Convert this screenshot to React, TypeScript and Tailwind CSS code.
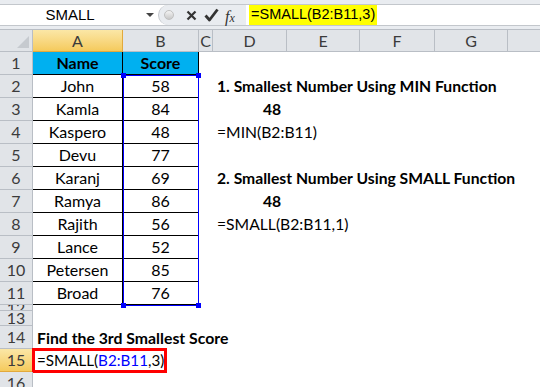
const FONT = "font-['Lato','Open_Sans',sans-serif]"

const cols = [90, 76, 14, 74, 73, 75, 73, 40]
const letters = ['A', 'B', 'C', 'D', 'E', 'F', 'G', '']

const data = [
  ['John', '58'],
  ['Kamla', '84'],
  ['Kaspero', '48'],
  ['Devu', '77'],
  ['Karanj', '69'],
  ['Ramya', '86'],
  ['Rajith', '56'],
  ['Lance', '52'],
  ['Petersen', '85'],
  ['Broad', '76'],
]

const side: Record<number, { text: string; bold?: boolean; indent?: boolean }> = {
  2: { text: '1. Smallest Number Using MIN Function', bold: true },
  3: { text: '48', bold: true, indent: true },
  4: { text: '=MIN(B2:B11)' },
  6: { text: '2. Smallest Number Using SMALL Function', bold: true },
  7: { text: '48', bold: true, indent: true },
  8: { text: '=SMALL(B2:B11,1)' },
}

function RowHead({ n, h, active }: { n: number; h: number; active?: boolean }) {
  return (
    <div
      style={{ height: h }}
      className={`w-[33px] shrink-0 flex items-center justify-center overflow-hidden border-r border-b text-[16px] text-[#3b3b3b] ${
        active
          ? 'bg-gradient-to-b from-[#fbe7a6] to-[#f5ca5b] border-[#e2a93c]'
          : 'bg-[#e1e4e8] border-[#b9bec5]'
      }`}
    >
      {n}
    </div>
  )
}

export default function App() {
  return (
    <div className={`w-[540px] h-[387px] overflow-hidden bg-white relative ${FONT}`}>
      {/* formula bar */}
      <div className="h-[30px] bg-[#e9ecf0] border-b border-[#b9bec5] pt-[4px]">
        <div className="h-[22px] flex bg-white border-y border-[#c3c7cc]">
          <div className="w-[158px] flex items-center relative">
            <span className="w-full text-center text-[15px] text-black font-['Liberation_Sans',sans-serif] pr-[18px]">SMALL</span>
            <span className="absolute right-[4px] top-[8px] w-0 h-0 border-x-[4px] border-x-transparent border-t-[4px] border-t-[#444]" />
          </div>
          <div className="w-[88px] flex items-center bg-[#e9ecf0] rounded-l-full border-l border-[#c3c7cc] relative">
            <span className="absolute left-[5px] top-[5px] w-[10px] h-[10px] rounded-full bg-gradient-to-b from-[#f4f4f4] to-[#c8c8c8] border border-[#c0c0c0]" />
            <svg className="absolute left-[27px] top-[5px]" width="11" height="11" viewBox="0 0 11 11">
              <path d="M1.5 1.5 L9.5 9.5 M9.5 1.5 L1.5 9.5" stroke="#333" strokeWidth="2.2" fill="none" />
            </svg>
            <svg className="absolute left-[45px] top-[3px]" width="15" height="14" viewBox="0 0 15 14">
              <path d="M1.5 7.5 L5.5 12 L13.5 1.5" stroke="#333" strokeWidth="2.8" fill="none" strokeLinejoin="round" />
            </svg>
            <span className="absolute left-[66px] top-[0px] text-[16px] italic text-[#333] font-['Liberation_Serif',serif]">
              f<span className="text-[12px]">x</span>
            </span>
          </div>
          <div className="flex-1 flex items-center pl-[3px]">
            <span className="bg-[#ffff00] h-full flex items-center px-[2px] text-[14.5px] text-black font-['Liberation_Sans',sans-serif]">
              =SMALL(B2:B11,3)
            </span>
          </div>
        </div>
      </div>

      {/* column headers */}
      <div className="flex h-[22px]">
        <div className="w-[33px] shrink-0 bg-[#e1e4e8] border-r border-b border-[#b9bec5] relative overflow-hidden">
          <span className="absolute right-[3px] bottom-[3px] w-0 h-0 border-l-[12px] border-l-transparent border-b-[12px] border-b-[#c6cacf]" />
        </div>
        {cols.map((w, i) => (
          <div
            key={i}
            style={{ width: w }}
            className={`shrink-0 flex items-center justify-center text-[16px] text-[#3b3b3b] border-r border-b ${
              i === 0
                ? 'bg-gradient-to-b from-[#fbe7a6] to-[#f5ca5b] border-[#e2a93c]'
                : 'bg-[#e1e4e8] border-[#b9bec5]'
            }`}
          >
            {letters[i]}
          </div>
        ))}
      </div>

      {/* row 1 */}
      <div className="flex h-[23px]">
        <RowHead n={1} h={23} />
        <div className="w-[90px] bg-[#00b0f0] border-r border-b border-black flex items-center justify-center text-[16px] font-bold text-black">
          Name
        </div>
        <div className="w-[76px] bg-[#00b0f0] border-r border-b border-black flex items-center justify-center text-[16px] font-bold text-black">
          Score
        </div>
      </div>

      {data.map(([name, score], i) => {
        const n = i + 2
        const s = side[n]
        return (
          <div key={n} className="flex h-[23px]">
            <RowHead n={n} h={23} />
            <div className="w-[90px] border-r border-b border-black flex items-center justify-center text-[16px] text-black">
              {name}
            </div>
            <div className="w-[76px] border-r border-b border-black flex items-center justify-center text-[16px] text-black">
              {score}
            </div>
            <div className="w-[14px]" />
            {s && (
              <div
                className={`flex items-center whitespace-nowrap text-[15.7px] text-black ${s.bold ? 'font-bold' : ''} ${
                  s.indent ? 'pl-[50px]' : 'pl-[4px]'
                }`}
              >
                {s.text}
              </div>
            )}
          </div>
        )
      })}

      <div className="flex h-[6px]">
        <RowHead n={12} h={6} />
      </div>
      <div className="flex h-[15px]">
        <RowHead n={13} h={15} />
      </div>
      <div className="flex h-[23px]">
        <RowHead n={14} h={23} />
        <div className="flex items-center pl-[4px] whitespace-nowrap text-[15.8px] font-bold text-black">
          Find the 3rd Smallest Score
        </div>
      </div>
      <div className="flex h-[23px]">
        <RowHead n={15} h={23} active />
        <div className="w-[135px] h-[25px] -mt-[1px] -ml-[1px] border-[3px] border-[#ff0000] flex items-center pl-[2px] text-[15.2px] text-black whitespace-nowrap">
          =SMALL(<span className="text-[#0000ff]">B2:B11</span>,3)
        </div>
      </div>
      <div className="flex h-[23px]">
        <RowHead n={16} h={23} />
      </div>

      {/* selection B2:B11 */}
      <div className="absolute left-[123px] top-[75px] w-[76px] h-[231px] border border-[#0000ff] pointer-events-none">
        <span className="absolute -left-[3px] -top-[3px] w-[5px] h-[5px] bg-[#0000ff]" />
        <span className="absolute -right-[3px] -top-[3px] w-[5px] h-[5px] bg-[#0000ff]" />
        <span className="absolute -left-[3px] -bottom-[3px] w-[5px] h-[5px] bg-[#0000ff]" />
        <span className="absolute -right-[3px] -bottom-[3px] w-[5px] h-[5px] bg-[#0000ff]" />
      </div>
    </div>
  )
}
